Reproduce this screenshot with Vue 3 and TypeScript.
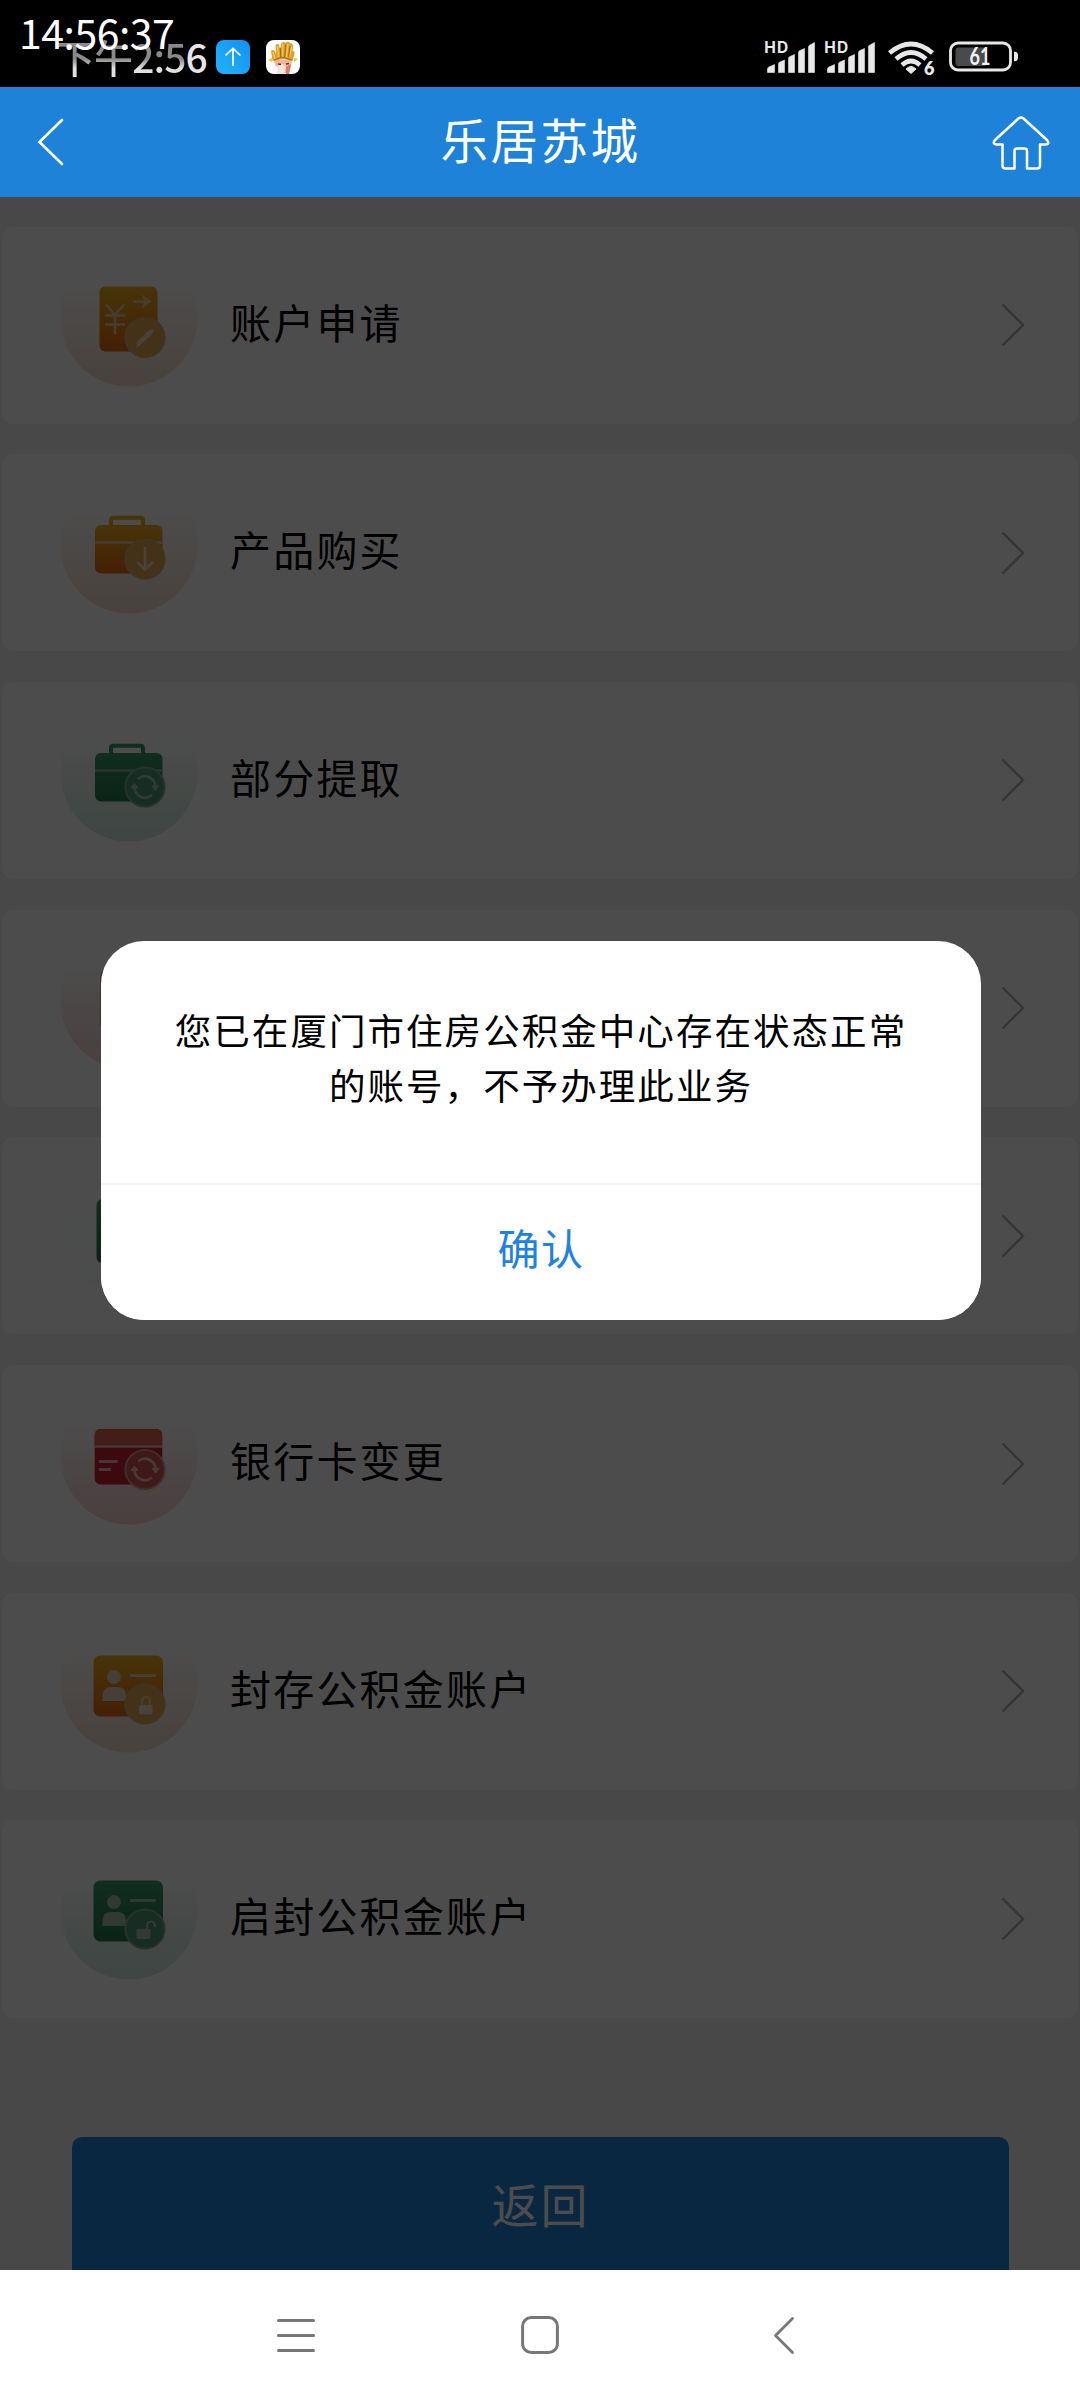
<script setup lang="ts">
type Kind = 'apply' | 'buy' | 'withdraw' | 'cancel' | 'query' | 'card' | 'seal' | 'unseal'
type Tone = 'orange' | 'green' | 'red'

interface Service {
  kind: Kind
  tone: Tone
  label: string
}

const services: Service[] = [
  { kind: 'apply', tone: 'orange', label: '账户申请' },
  { kind: 'buy', tone: 'orange', label: '产品购买' },
  { kind: 'withdraw', tone: 'green', label: '部分提取' },
  { kind: 'cancel', tone: 'red', label: '' },
  { kind: 'query', tone: 'green', label: '' },
  { kind: 'card', tone: 'red', label: '银行卡变更' },
  { kind: 'seal', tone: 'orange', label: '封存公积金账户' },
  { kind: 'unseal', tone: 'green', label: '启封公积金账户' },
]

const tones: Record<Tone, { top: string; bottom: string; halo: string; badge: string }> = {
  orange: { top: '#ecb01c', bottom: '#e46a10', halo: '#e8b898', badge: '#e2a850' },
  green: { top: '#38986c', bottom: '#247850', halo: '#a0d4bc', badge: '#4f9476' },
  red: { top: '#dc644e', bottom: '#c82034', halo: '#eca4a4', badge: '#d0544e' },
}
</script>

<template>
  <div class="screen">
    <header class="status">
      <div class="clocks">
        <span class="clock-front">14:56:37</span>
        <span class="clock-back"><span class="dim">下午2:5</span><span>6</span></span>
      </div>
      <svg class="app-icon first" viewBox="0 0 34 34">
        <defs>
          <linearGradient id="sky" x1="1" y1="0" x2="0" y2="1">
            <stop offset="0" stop-color="#1590f0" />
            <stop offset="1" stop-color="#20b4ff" />
          </linearGradient>
        </defs>
        <rect width="34" height="34" rx="8" fill="url(#sky)" />
        <path d="M17 26V8.500M9.500 15.500L17 8.500L24.500 15.500" fill="none" stroke="#fff" stroke-width="1.700" />
      </svg>
      <svg class="app-icon" viewBox="0 0 34 34">
        <rect width="34" height="34" rx="8" fill="#fff" />
        <path d="M2 20l4-2v4zM32 19l-4-1v4z" fill="#f2c04c" />
        <path d="M8 20h18l-1 6-2 7H11l2-5-4-3z" fill="#f3b49c" />
        <path d="M11 26l6-2 3 3-2 7h-7l2-5z" fill="#f7e4d8" />
        <path d="M20 27l5-3-2 10h-3z" fill="#e07868" />
        <path d="M6.500 21L5 11Q7 9 8.500 11L10 14L9.500 5Q11.500 3 13 5L14 9L15.500 3Q18 1 19.500 3Q22 0 24 3Q27 3 27 7L26.500 11Q29 11 28.500 14L26.500 21L18 19Z" fill="#dda02c" />
        <path d="M11.500 6l1 11M17 4l-.5 13M22 4l-1.500 13M25.500 7l-2 10M7 12l2 7" stroke="#f2c452" stroke-width="1.400" fill="none" />
        <path d="M14.300 8l.4 9M19.500 5l-.8 12M8 20l8-3 10 3M24 6l-1.500 11" stroke="#8f5416" stroke-width=".8" fill="none" />
        <path d="M12 24l3 .5M20 24l3-.5" stroke="#6b3528" stroke-width="1.300" />
      </svg>
      <svg class="indicators" viewBox="0 0 260 40">
        <g fill="#e8e8e8">
          <g v-for="x in [0, 60]" :key="x" :transform="`translate(${x} 0)`">
            <text x="-0.800" y="13" class="hd" textLength="24">HD</text>
            <path d="M2.500 32.500v-3.500q0-1.500 1.500-2l5.500-2.500v8zM13.500 32.500v-8.500q0-1.500 1.500-2l4.500-2v12.500zM23.500 32.500v-14q0-1.500 1.500-2l4.500-2v18zM33.500 32.500v-20q0-1.500 1.500-2l4.500-2v24zM43.500 32.500v-25.500q0-1.500 1.500-2l4.500-2.500v30z" stroke="#e8e8e8" stroke-width=".6" stroke-linejoin="round" />
          </g>
          <path d="M146 33.500l-5-4.500q5-5 10 0z" stroke="#e8e8e8" stroke-width="1" stroke-linejoin="round" />
          <text x="159" y="35" class="wifi-gen">6</text>
        </g>
        <g fill="none" stroke="#e8e8e8" stroke-width="4.600">
          <path d="M124.500 13Q146-5 167.500 13" />
          <path d="M131 19Q146 6 161 19" />
          <path d="M137 25Q146 17 155 25" />
        </g>
        <rect x="185.500" y="3" width="60" height="27" rx="7.500" fill="none" stroke="#e8e8e8" stroke-width="2.800" />
        <rect x="190.500" y="7.500" width="31" height="18.500" rx="3" fill="#4a4a4a" />
        <path d="M249.500 12q3 0 3 3v3q0 3-3 3z" fill="#e8e8e8" stroke="#e8e8e8" />
        <text x="204.500" y="25.200" class="battery" textLength="21" lengthAdjust="spacingAndGlyphs">61</text>
      </svg>
    </header>

    <nav class="title-bar">
      <svg class="back" viewBox="0 0 30 50"><path d="M26 3L3.500 25L26 47" fill="none" stroke="#fff" stroke-width="2.600" stroke-linecap="round" /></svg>
      <h1>乐居苏城</h1>
      <svg class="home" viewBox="0 0 60 56">
        <path d="M27.500 3.500Q30 1.500 32.500 3.500L56 25Q59 29 55 29.500H49V50.500Q49 53.500 46 53.500H36V36Q36 33.500 33.500 33.500H26Q23.500 33.500 23.500 36V53.500H14.500Q11.500 53.500 11.500 50.500V29.500H5.500Q1 29 4 25Z" fill="none" stroke="#fff" stroke-width="2.500" stroke-linejoin="round" />
      </svg>
    </nav>

    <main class="content">
      <svg class="defs" width="0" height="0">
        <defs>
          <template v-for="(t, name) in tones" :key="name">
            <linearGradient :id="`fill-${name}`" x1="0" y1="0" x2="0" y2="1">
              <stop offset="0" :stop-color="t.top" />
              <stop offset="1" :stop-color="t.bottom" />
            </linearGradient>
            <linearGradient :id="`halo-${name}`" x1="0" y1="0" x2="0" y2="1">
              <stop offset="0.250" :stop-color="t.halo" stop-opacity="0" />
              <stop offset="0.600" :stop-color="t.halo" stop-opacity="0.250" />
              <stop offset="1" :stop-color="t.halo" stop-opacity="0.480" />
            </linearGradient>
          </template>
        </defs>
      </svg>

      <section v-for="s in services" :key="s.kind" class="service">
        <svg class="service-icon" viewBox="59 0 140 197">
          <circle cx="129" cy="91" r="68.500" :fill="`url(#halo-${s.tone})`" :opacity="s.kind === 'query' ? 0.15 : 1" />

          <template v-if="s.kind === 'apply'">
            <rect x="99.500" y="59.500" width="58" height="65" rx="6" :fill="`url(#fill-${s.tone})`" />
            <path d="M106 77.500L115 88L124 77.500M105 88.500H125M105 97.500H125M115 88V107.500" fill="none" stroke="#e6cda8" stroke-width="2.400" />
            <path d="M133.500 74.500H145" stroke="#e6cda8" stroke-width="2.400" />
            <path d="M142 67.500L151.500 74.500L142 81.500L144.500 74.500Z" fill="#e6cda8" />
          </template>

          <template v-else-if="s.kind === 'buy' || s.kind === 'withdraw'">
            <path d="M111 72V66.500Q111 63.800 113.500 63.800H140.500Q143 63.800 143 66.500V72" fill="none" :stroke="tones[s.tone].top" stroke-width="4" />
            <rect x="95" y="71" width="67.500" height="48.500" rx="6" :fill="`url(#fill-${s.tone})`" />
            <path d="M95 88.500H163" :stroke="s.tone === 'green' ? '#8fae9e' : '#d8cdb8'" stroke-width="2.600" />
          </template>

          <template v-else-if="s.kind === 'card'">
            <rect x="94.700" y="64" width="67.500" height="55.500" rx="6" :fill="tones.red.bottom" />
            <path d="M94.700 80V70Q94.700 64 100.700 64H156.200Q162.200 64 162.200 70V80Z" :fill="tones.red.top" />
            <path d="M94.700 81.500H162.200" stroke="#e8b8b0" stroke-width="2.600" />
            <path d="M100 96.500H116.500M100 104.500H110" stroke="#e8b8b0" stroke-width="2.800" stroke-linecap="round" />
          </template>

          <template v-else-if="s.kind === 'seal' || s.kind === 'unseal'">
            <g :transform="s.kind === 'unseal' ? 'translate(0 -2)' : undefined">
              <rect x="93.500" y="62.500" width="69.500" height="61" rx="7" :fill="`url(#fill-${s.tone})`" />
              <g :fill="s.tone === 'green' ? '#a4bfb0' : '#e8d4b4'">
                <circle cx="114" cy="84" r="6.900" />
                <path d="M102.500 108V103Q102.500 94 111 94H117.500Q126 94 126 103V108Z" />
                <rect x="130" y="81" width="26" height="3" rx="1" />
              </g>
            </g>
          </template>

          <rect v-else-if="s.kind === 'cancel'" x="100.500" y="60" width="57" height="60" rx="6" fill="url(#fill-red)" />
          <rect v-else x="96.500" y="62" width="66" height="64" rx="6" fill="url(#fill-green)" />

          <g v-if="s.label" :transform="`translate(145 ${{ apply: 110.500, buy: 105, withdraw: 105, card: 104.500, seal: 111, unseal: 109, cancel: 105, query: 105 }[s.kind]})`">
            <circle r="19.600" :fill="tones[s.tone].badge" :stroke="s.tone === 'green' ? '#86a896' : s.tone === 'red' ? '#d69a92' : '#d0ac78'" stroke-width="2" />
            <path v-if="s.kind === 'apply'" d="M-7.500 8.500L-6 3.500L4 -6L7.500 -7.500L6.500 -4L-3.500 5.500Z" fill="#f4dfb8" stroke="#f4dfb8" stroke-width="1.500" />
            <path v-else-if="s.kind === 'buy'" d="M0 -12V10M-8 3L0 10.500L8 3" fill="none" stroke="#f4dfb8" stroke-width="2.600" />
            <g v-else-if="s.kind === 'withdraw' || s.kind === 'card'" fill="none" stroke-width="2.600" :stroke="s.tone === 'green' ? '#a4c4b4' : '#efc0b8'">
              <path d="M-7 -8A10.500 10.500 0 0 1 10.500 0M7 8A10.500 10.500 0 0 1 -10.500 0" />
              <path d="M7 -1H14L10.500 3.500ZM-7 1H-14L-10.500 -3.500Z" :fill="s.tone === 'green' ? '#a4c4b4' : '#efc0b8'" stroke-width="1" />
            </g>
            <g v-else-if="s.kind === 'seal'">
              <rect x="-6" y="1" width="13.500" height="9.500" rx="1.500" fill="#f0dcb8" />
              <path d="M-3 1V-3Q-3 -7 .8 -7Q4.600 -7 4.600 -3V1" fill="none" stroke="#f0cc94" stroke-width="2.200" />
            </g>
            <g v-else-if="s.kind === 'unseal'">
              <rect x="-8.500" y="0" width="14" height="10" rx="1.500" fill="#a4c4b4" />
              <path d="M2 0V-2.500Q2 -7.500 6 -7.500Q10 -7.500 10 -2" fill="none" stroke="#a4c4b4" stroke-width="2.200" />
            </g>
          </g>
        </svg>
        <span class="label">{{ s.label }}</span>
        <svg class="chevron" viewBox="0 0 24 44"><path d="M1.500 1.500L22 22L1.500 42.500" fill="none" stroke="#b0b0b0" stroke-width="2.400" /></svg>
      </section>

      <button class="return">返回</button>

      <div class="overlay">
        <div class="dialog">
          <p>您已在厦门市住房公积金中心存在状态正常<br />的账号，不予办理此业务</p>
          <button class="confirm">确认</button>
        </div>
      </div>
    </main>

    <footer class="system-nav">
      <svg viewBox="0 0 40 40"><path d="M2.500 5.500H37.500M2.500 20.500H37.500M2.500 35.500H37.500" stroke="#777" stroke-width="3" stroke-linecap="round" /></svg>
      <svg viewBox="0 0 40 40"><rect x="2.600" y="2.600" width="34.800" height="34.800" rx="8.500" fill="none" stroke="#777" stroke-width="3" /></svg>
      <svg viewBox="0 0 40 40"><path d="M28.500 3.500L11.500 20.500L28.500 37.500" fill="none" stroke="#777" stroke-width="2.800" stroke-linecap="round" stroke-linejoin="round" /></svg>
    </footer>
  </div>
</template>

<style>
body {
  margin: 0;
}
</style>

<style scoped>
.screen {
  width: 1080px;
  height: 2400px;
  display: flex;
  flex-direction: column;
  overflow: hidden;
  font-family: "Noto Sans CJK SC", sans-serif;
}
svg {
  display: block;
  flex: none;
}
button {
  border: 0;
  padding: 0;
  margin: 0;
  font-family: inherit;
}
.status {
  flex: none;
  height: 87px;
  background: #000;
  display: flex;
  align-items: flex-start;
  color: #fff;
}
.clocks {
  position: relative;
  width: 216px;
  height: 87px;
  white-space: nowrap;
}
.clock-front {
  position: absolute;
  z-index: 1;
  left: 19px;
  top: 8px;
  font-size: 41px;
  line-height: 46px;
  letter-spacing: -0.500px;
}
.clock-back {
  position: absolute;
  left: 56px;
  top: 33px;
  font-size: 39px;
  line-height: 46px;
  font-weight: 500;
  color: #e6e6e6;
  letter-spacing: -0.900px;
}
.dim {
  background: linear-gradient(to bottom, #8a8a8a 55%, #e0e0e0 72%);
  background-clip: text;
  -webkit-background-clip: text;
  color: transparent;
}
.app-icon {
  width: 34px;
  height: 34px;
  margin: 40px 16px 0 0;
}
.indicators {
  width: 260px;
  height: 40px;
  margin: 40px 55px 0 auto;
  overflow: visible;
}
.hd {
  font: 700 15.500px Inter, sans-serif;
}
.wifi-gen {
  font: 800 18px Lato, sans-serif;
}
.battery {
  font: 700 25px Lato, sans-serif;
  fill: #f2f2f2;
}
.title-bar {
  flex: none;
  height: 110px;
  background: #1e82d8;
  display: flex;
  align-items: center;
  justify-content: space-between;
  box-sizing: border-box;
  padding: 0 29px 0 36px;
}
.back {
  width: 30px;
  height: 50px;
  margin-right: 24px;
}
.title-bar h1 {
  margin: 0;
  padding-bottom: 6px;
  font-size: 47.500px;
  line-height: 60px;
  font-weight: 400;
  letter-spacing: 2.500px;
  color: #fff;
}
.home {
  width: 60px;
  height: 56px;
  margin-top: 2px;
}
.content {
  position: relative;
  height: 2073px;
  flex: none;
  box-sizing: border-box;
  padding: 29.500px 2px 0;
  background: #f2f2f2;
  overflow: hidden;
}
.defs {
  position: absolute;
}
.service {
  height: 197.200px;
  margin-bottom: 30.500px;
  border-radius: 12px;
  background: #fff;
  display: flex;
  align-items: center;
  box-sizing: border-box;
  padding: 0 53px 0 57px;
}
.service-icon {
  width: 140px;
  height: 197px;
}
.label {
  flex: 1;
  margin-left: 31px;
  padding-bottom: 9px;
  font-size: 41px;
  line-height: 60px;
  letter-spacing: 2.200px;
  color: #000;
}
.chevron {
  width: 24px;
  height: 44px;
}
.return {
  display: block;
  width: 937px;
  height: 148px;
  margin: 119.500px 0 0 70px;
  padding-bottom: 18px;
  border-radius: 10px;
  background: #1e82d8;
  color: #fff;
  font-size: 47px;
  letter-spacing: 2px;
}
.overlay {
  position: absolute;
  inset: 0;
  background: rgba(0, 0, 0, 0.700);
  display: flex;
  justify-content: center;
  align-items: flex-start;
  padding-top: 744px;
}
.dialog {
  width: 880px;
  height: 379px;
  margin-left: 2px;
  border-radius: 43px;
  background: #fff;
  display: flex;
  flex-direction: column;
  overflow: hidden;
}
.dialog p {
  flex: 1;
  margin: 0;
  padding-top: 61px;
  font-size: 36.500px;
  line-height: 55px;
  letter-spacing: 2.050px;
  text-align: center;
  color: #000;
  white-space: nowrap;
}
.confirm {
  height: 137px;
  padding-bottom: 13px;
  border-top: 2px solid #f3f3f3;
  background: #fff;
  font-size: 42px;
  letter-spacing: 1.500px;
  color: #1e82e0;
}
.system-nav {
  flex: none;
  height: 130px;
  background: #fff;
  display: flex;
  align-items: center;
  justify-content: center;
  gap: 204px;
}
.system-nav svg {
  width: 40px;
  height: 40px;
}
</style>
